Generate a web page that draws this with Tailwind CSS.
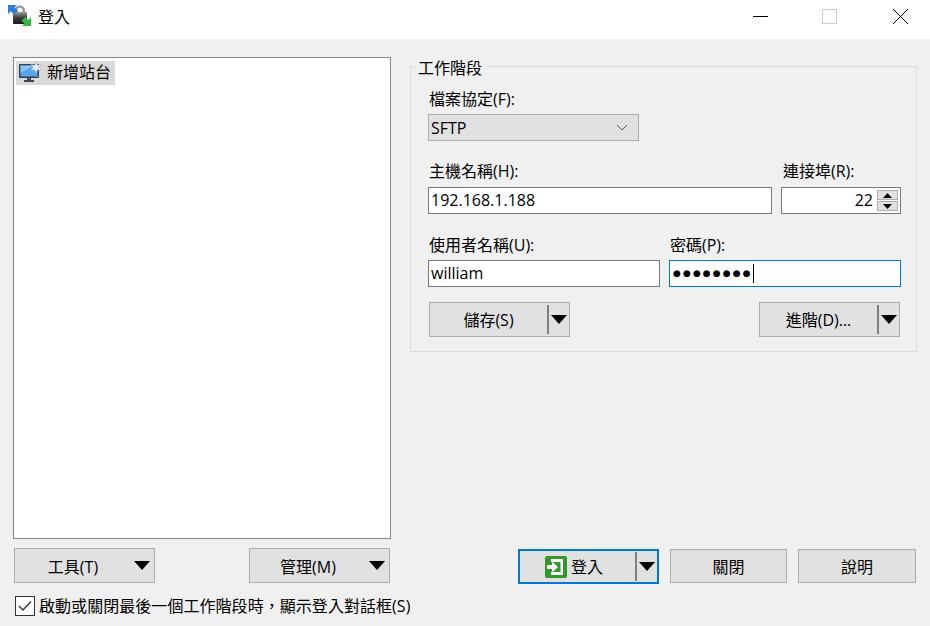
<!DOCTYPE html>
<html lang="zh-TW">
<head>
  <meta charset="UTF-8">
  <title>登入</title>
  <script src="https://cdn.jsdelivr.net/npm/@tailwindcss/browser@4"></script>
</head>
<body class="w-[930px] h-[626px] overflow-hidden bg-[#f0f0f0] text-black text-[16px] leading-5 font-['Open_Sans','Noto_Sans_CJK_TC',sans-serif]">
  <!-- Title bar -->
  <header class="h-[39px] bg-white flex items-center pb-[5px]">
    <svg class="ml-[8px] w-[24px] h-[24px]" viewBox="0 0 24 24">
      <defs>
        <linearGradient id="lockBody" x1="0" y1="0" x2="0" y2="1">
          <stop offset="0" stop-color="#9a9a9a"/>
          <stop offset=".5" stop-color="#3a3a3a"/>
          <stop offset="1" stop-color="#1c1c1c"/>
        </linearGradient>
      </defs>
      <path d="M7 8 V5 C7 -1 17 -1 17 5 V8 H14.5 V5 C14.5 2 9.5 2 9.5 5 V8 Z" fill="#9a9a9a"/>
      <rect x="5" y="7" width="14" height="12" rx="1" fill="url(#lockBody)"/>
      <path d="M0 0 H9 L6.5 2.5 L10 6 L6 9.5 L2.8 6.2 L0 9 Z" fill="#2a7de1"/>
      <path d="M23 21 H14 L16.5 18.5 L13.5 15.5 L17.5 12 L20.3 15 L23 12 Z" fill="#35b83f"/>
    </svg>
    <span class="ml-[6px]">登入</span>
    <div class="ml-auto flex items-center">
      <svg class="w-[16px] h-[16px] mr-[53px]" viewBox="0 0 16 16"><path d="M1 7.5 H16" stroke="#000" stroke-width="1"/></svg>
      <svg class="w-[16px] h-[16px] mr-[55px]" viewBox="0 0 16 16"><rect x="1.5" y=".5" width="14" height="14" fill="none" stroke="#cccccc"/></svg>
      <svg class="w-[16px] h-[16px] mr-[22px]" viewBox="0 0 16 16"><path d="M1 0 L16 15 M16 0 L1 15" stroke="#000" stroke-width="1"/></svg>
    </div>
  </header>

  <main class="px-[13px] pt-[18px]">
    <div class="flex items-start h-[482px]">
      <!-- Site tree -->
      <div class="w-[378px] h-full bg-white border border-[#828790] p-[2px] pt-[3px]">
        <div class="h-[24px] w-[99px] bg-[#d9d9d9] flex items-center pl-[2px]">
          <svg class="w-[24px] h-[24px] shrink-0" viewBox="0 0 24 24">
            <rect x="1" y="3" width="20" height="14" rx="1" fill="#2f3f55"/>
            <rect x="2.5" y="4.5" width="17" height="11" fill="#5aa2ee"/>
            <path d="M2.5 4.5 H16 L2.5 12 Z" fill="#8cc3f5"/>
            <rect x="9" y="17" width="4" height="2" fill="#44505e"/>
            <rect x="6" y="19" width="10" height="2" fill="#3a4654"/>
            <rect x="18" y="15" width="2" height="1" fill="#37c24a"/>
            <path d="M18 1 L19.4 4.2 L23 3.6 L20.8 6.5 L23 9.4 L19.4 8.8 L18 12 L16.6 8.8 L13 9.4 L15.2 6.5 L13 3.6 L16.6 4.2 Z" fill="#e6ecf4" stroke="#9fb0c4" stroke-width=".5"/>
          </svg>
          <span class="ml-[5px] pb-[2px] whitespace-nowrap">新增站台</span>
        </div>
      </div>

      <!-- Session group -->
      <section class="relative ml-[19px] mt-[9px] w-[507px] h-[286px] border border-[#dcdcdc] pl-[17px] pt-[22px]">
        <span class="absolute left-[4px] top-[-9px] bg-[#f0f0f0] px-[3px]">工作階段</span>

        <label class="block pl-px h-5">檔案協定(F):</label>
        <div class="mt-[5px] w-[211px] h-[27px] bg-[#e1e1e1] border border-[#adadad] flex items-center justify-between pl-[2px] pr-[10px]">
          <span>SFTP</span>
          <svg class="w-[12px] h-[8px]" viewBox="0 0 12 8"><path d="M1 1 L6 6 L11 1" fill="none" stroke="#555" stroke-width="1"/></svg>
        </div>

        <div class="mt-[20px] flex gap-[9px]">
          <div class="w-[344px]">
            <label class="block pl-px h-5">主機名稱(H):</label>
            <div class="mt-[6px] h-[27px] bg-white border border-[#7a7a7a] flex items-center pl-[2px] pb-[2px]">192.168.1.188</div>
          </div>
          <div class="w-[120px]">
            <label class="block pl-[2px] h-5">連接埠(R):</label>
            <div class="mt-[6px] h-[27px] bg-white border border-[#7a7a7a] flex items-center justify-end">
              <span class="mr-[4px] pb-[2px]">22</span>
              <div class="flex flex-col gap-[1px] mr-[2px]">
                <div class="w-[21px] h-[10px] bg-[#e1e1e1] border border-[#adadad] flex items-center justify-center">
                  <svg class="w-[9px] h-[5px]" viewBox="0 0 9 5"><path d="M4.5 0 L9 5 H0 Z" fill="#000"/></svg>
                </div>
                <div class="w-[21px] h-[10px] bg-[#e1e1e1] border border-[#adadad] flex items-center justify-center">
                  <svg class="w-[9px] h-[5px]" viewBox="0 0 9 5"><path d="M0 0 H9 L4.5 5 Z" fill="#000"/></svg>
                </div>
              </div>
            </div>
          </div>
        </div>

        <div class="mt-[21px] flex gap-[9px]">
          <div class="w-[232px]">
            <label class="block pl-px h-5">使用者名稱(U):</label>
            <div class="mt-[5px] h-[27px] bg-white border border-[#7a7a7a] flex items-center pl-[2px] pb-[2px]">william</div>
          </div>
          <div class="w-[232px]">
            <label class="block pl-px h-5">密碼(P):</label>
            <div class="mt-[5px] h-[27px] bg-white border border-[#0078d7] flex items-center pl-[3px]">
              <span class="font-['DejaVu_Sans'] text-[9px] leading-none tracking-[2.1px]">●●●●●●●●</span>
              <span class="w-px h-[19px] bg-black"></span>
            </div>
          </div>
        </div>

        <div class="mt-[15px] ml-px w-[471px] flex justify-between">
          <button class="w-[141px] h-[35px] bg-[#e1e1e1] border border-[#adadad] flex items-center">
            <span class="w-[117px] text-center pt-px">儲存(S)</span>
            <span class="w-[2px] h-[29px] bg-[#7f7f7f]"></span>
            <svg class="ml-[2px] w-[16px] h-[9px]" viewBox="0 0 16 9"><path d="M0 0 H16 L8 9 Z" fill="#000"/></svg>
          </button>
          <button class="w-[141px] h-[35px] bg-[#e1e1e1] border border-[#adadad] flex items-center">
            <span class="w-[117px] text-center pt-px">進階(D)...</span>
            <span class="w-[2px] h-[29px] bg-[#7f7f7f]"></span>
            <svg class="ml-[2px] w-[16px] h-[9px]" viewBox="0 0 16 9"><path d="M0 0 H16 L8 9 Z" fill="#000"/></svg>
          </button>
        </div>
      </section>
    </div>

    <!-- Bottom buttons -->
    <div class="mt-[9px] flex items-start">
      <button class="ml-px w-[141px] h-[35px] bg-[#e1e1e1] border border-[#adadad] flex items-center">
        <span class="w-[116px] text-center pt-[2px]">工具(T)</span>
        <svg class="ml-[3px] w-[16px] h-[9px] mb-px" viewBox="0 0 16 9"><path d="M0 0 H16 L8 9 Z" fill="#000"/></svg>
      </button>
      <button class="ml-[94px] w-[141px] h-[35px] bg-[#e1e1e1] border border-[#adadad] flex items-center">
        <span class="w-[116px] text-center pt-[2px]">管理(M)</span>
        <svg class="ml-[3px] w-[16px] h-[9px] mb-px" viewBox="0 0 16 9"><path d="M0 0 H16 L8 9 Z" fill="#000"/></svg>
      </button>
      <button class="ml-[128px] mt-px w-[141px] h-[35px] bg-[#e1e1e1] border-2 border-[#0078d7] flex items-center">
        <svg class="ml-[25px] w-[22px] h-[22px]" viewBox="0 0 22 22">
          <rect width="22" height="22" rx="2" fill="#2f9a2a"/>
          <path d="M6 3 H18 V19 H6 V16 H15.5 V6 H6 Z" fill="#fff"/>
          <path d="M2 9 H7 V5.5 L13 11 L7 16.5 V13 H2 Z" fill="#fff"/>
        </svg>
        <span class="ml-[4px] w-[59px] text-left">登入</span>
        <span class="ml-[5px] w-[2px] h-[29px] bg-[#7f7f7f]"></span>
        <svg class="ml-[2px] w-[16px] h-[9px]" viewBox="0 0 16 9"><path d="M0 0 H16 L8 9 Z" fill="#000"/></svg>
      </button>
      <button class="ml-[11px] mt-px w-[117px] h-[34px] bg-[#e1e1e1] border border-[#adadad] pt-px">關閉</button>
      <button class="ml-[11px] mt-px w-[118px] h-[34px] bg-[#e1e1e1] border border-[#adadad] pt-px">說明</button>
    </div>

    <!-- Checkbox -->
    <div class="mt-[12px] ml-[2px] flex items-center">
      <span class="w-[20px] h-[20px] bg-white border border-[#333333] flex items-center justify-center">
        <svg class="w-[14px] h-[12px]" viewBox="0 0 14 12"><path d="M1 6 L5 10 L13 1.5" fill="none" stroke="#333" stroke-width="1.4"/></svg>
      </span>
      <span class="ml-[4px] whitespace-nowrap tracking-[0.05px]">啟動或關閉最後一個工作階段時，顯示登入對話框(S)</span>
    </div>
  </main>
</body>
</html>
